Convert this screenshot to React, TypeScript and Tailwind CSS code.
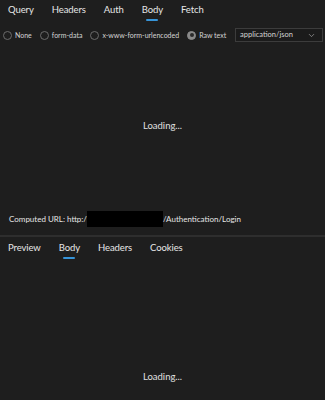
import { ChevronDown } from "lucide-react";

const requestTabs = ["Query", "Headers", "Auth", "Body", "Fetch"];
const responseTabs = ["Preview", "Body", "Headers", "Cookies"];
const bodyModes = ["None", "form-data", "x-www-form-urlencoded", "Raw text"];

function Tabs({ items, active }: { items: string[]; active: string }) {
    return (
        <div className="flex items-start gap-[18px] px-[8px]">
            {items.map((t) => (
                <div key={t} className="flex flex-col items-center">
                    <span className="whitespace-nowrap text-[9.5px] leading-[18px] tracking-[-0.1px] text-[#e6e6e6]">{t}</span>
                    <div
                        className={`h-[2px] w-[12px] rounded-full ${t === active ? "bg-[#3794d8]" : "bg-transparent"}`}
                    />
                </div>
            ))}
        </div>
    );
}

function Radio({ label, checked }: { label: string; checked?: boolean }) {
    return (
        <label className="flex shrink-0 items-center gap-[3px]">
            <span
                className={`flex h-[9px] w-[9px] items-center justify-center rounded-full border ${checked ? "border-[#8a8a8a] bg-[#8a8a8a]" : "border-[#6b6b6b]"}`}
            >
                {checked && <span className="h-[4px] w-[4px] rounded-full bg-[#2a2a2a]" />}
            </span>
            <span className="whitespace-nowrap text-[7px] text-[#d4d4d4]">{label}</span>
        </label>
    );
}

export default function App() {
    return (
        <div className="flex h-[400px] flex-col overflow-hidden bg-[#1e1e1e] font-['Lato',sans-serif]">
            {/* request */}
            <div className="flex h-[235px] shrink-0 flex-col">
                <div className="pt-[1px]">
                    <Tabs items={requestTabs} active="Body" />
                </div>
                <div className="flex items-center gap-[8px] pl-[3px] pr-[2px] pt-[7px]">
                    {bodyModes.map((m) => (
                        <Radio key={m} label={m} checked={m === "Raw text"} />
                    ))}
                    <div className="ml-auto flex h-[14px] w-[88px] shrink-0 items-center justify-between border border-[#3c3c3c] bg-[#1b1b1b] pl-[4px] pr-[6px]">
                        <span className="whitespace-nowrap text-[7.5px] text-[#d4d4d4]">application/json</span>
                        <ChevronDown className="h-[9px] w-[9px] text-[#9a9a9a]" />
                    </div>
                </div>
                <div className="flex flex-1 items-center justify-center">
                    <span className="text-[9.5px] text-[#e0e0e0]">Loading...</span>
                </div>
                <div className="flex items-center px-[9px] pb-[8px] text-[8px] text-[#e6e6e6]">
                    <span className="whitespace-nowrap">Computed URL: http:/</span>
                    <span className="h-[16px] w-[76px] shrink-0 bg-black" />
                    <span className="whitespace-nowrap">/Authentication/Login</span>
                </div>
            </div>
            <div className="h-[2px] shrink-0 bg-[#2e2e2e]" />
            {/* response */}
            <div className="flex shrink-0 flex-col pt-[2px]">
                <Tabs items={responseTabs} active="Body" />
                <div className="flex h-[236px] items-center justify-center">
                    <span className="text-[9.5px] text-[#e0e0e0]">Loading...</span>
                </div>
            </div>
        </div>
    );
}
